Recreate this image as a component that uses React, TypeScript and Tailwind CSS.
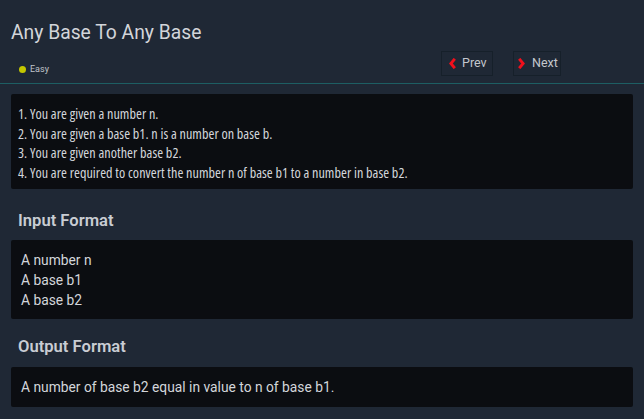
import React from 'react';

function Chevron({ dir }: { dir: 'left' | 'right' }) {
  return (
    <svg width="7" height="11" viewBox="0 0 7 11" className="shrink-0">
      <path
        d={dir === 'left' ? 'M5.8 0.8 L1.9 5.5 L5.8 10.2' : 'M1.2 0.8 L5.1 5.5 L1.2 10.2'}
        fill="none"
        stroke="#f0101c"
        strokeWidth="2.9"
        strokeLinejoin="miter"
      />
    </svg>
  );
}

const steps = [
  '1. You are given a number n.',
  '2. You are given a base b1. n is a number on base b.',
  '3. You are given another base b2.',
  '4. You are required to convert the number n of base b1 to a number in base b2.',
];

export default function App() {
  return (
    <div className="w-[644px] h-[419px] bg-[#1f2835] overflow-hidden font-['Roboto','Noto_Sans',sans-serif]">
      <div className="h-[84px] border-b border-[#1d5e63] relative">
        <h1 className="pl-[11px] pt-[20px] text-[19.3px] leading-[26px] text-[#d2d5da]">Any Base To Any Base</h1>
        <div className="flex items-center gap-[4px] pl-[19px] pt-[17px]">
          <span className="w-[7px] h-[7px] rounded-full bg-[#c4c700]" />
          <span className="text-[9px] leading-[12px] text-[#c0c4ca]">Easy</span>
        </div>
        <div className="absolute top-[51px] left-[441px] flex gap-[20px]">
          <button className="w-[52px] h-[25px] pl-[7px] border border-[#16202a] flex items-center gap-[6px] text-[12.5px] text-[#c3c7cd]">
            <Chevron dir="left" />
            Prev
          </button>
          <button className="w-[48px] h-[25px] pl-[4px] border border-[#16202a] flex items-center gap-[7px] text-[12.5px] text-[#c3c7cd]">
            <Chevron dir="right" />
            Next
          </button>
        </div>
      </div>
      <div className="pt-[10px]">
        <div className="mx-[11px] bg-[#0b0d11] rounded-[2px] pl-[7px] pr-[10px] pt-[10px] pb-[7px] font-['Open_Sans',sans-serif] font-stretch-condensed text-[14.2px] tracking-[0.05px] leading-[19.5px] text-[#d3d6db]">
          {steps.map((l) => (
            <div key={l}>{l}</div>
          ))}
        </div>
        <h2 className="px-[18px] pt-[22px] pb-[9px] text-[16.6px] leading-[20px] font-semibold text-[#c9cdd3]">Input Format</h2>
        <div className="mx-[11px] bg-[#0b0d11] rounded-[2px] px-[10px] py-[9.5px] text-[13.8px] leading-[20px] text-[#d3d6db]">
          <div>A number n</div>
          <div>A base b1</div>
          <div>A base b2</div>
        </div>
        <h2 className="px-[18px] pt-[18px] pb-[10px] text-[16.6px] leading-[20px] font-semibold text-[#c9cdd3]">Output Format</h2>
        <div className="mx-[11px] bg-[#0b0d11] rounded-[2px] px-[10px] py-[10px] text-[13.8px] leading-[20px] text-[#d3d6db]">
          A number of base b2 equal in value to n of base b1.
        </div>
      </div>
    </div>
  );
}
